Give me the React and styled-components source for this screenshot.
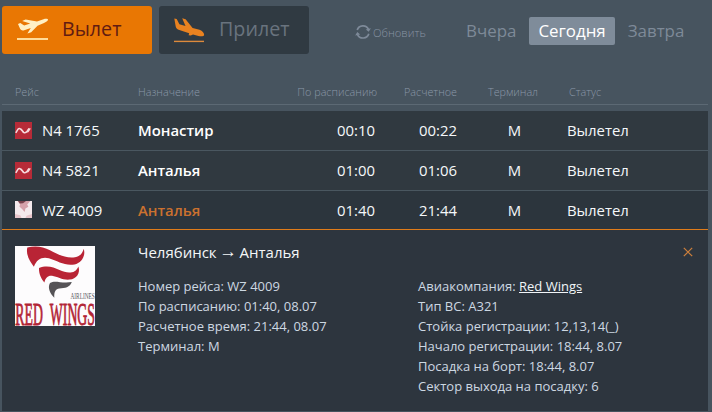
import React, { useState } from 'react';
import styled, { createGlobalStyle } from 'styled-components';

const flights = [
  { number: 'N4 1765', city: 'Монастир', plan: '00:10', fact: '00:22', terminal: 'M', status: 'Вылетел', airline: 'nordwind' },
  { number: 'N4 5821', city: 'Анталья', plan: '01:00', fact: '01:06', terminal: 'M', status: 'Вылетел', airline: 'nordwind' },
  { number: 'WZ 4009', city: 'Анталья', plan: '01:40', fact: '21:44', terminal: 'M', status: 'Вылетел', airline: 'redwings' },
];

const days = ['Вчера', 'Сегодня', 'Завтра'];

const DepartureIcon = () => (
  <svg width="32" height="24" viewBox="0 0 32 24">
    <path
      d="M1 6L3.3 5L7.2 7.6L13.2 5.5L5.2 2.9L8.6 1.4L20 3.5L26.5 1.2C29 .5 31.2 .8 31 1.8C30.8 3 28.8 4.2 27 5L20.5 7.8L14.2 14.2L10.4 15.4L13.8 10L7.2 12.2C5.2 12.7 4 12.2 3.2 11Z"
      fill="#fff0c4"
    />
    <path d="M0 21H31" stroke="#ffdc9a" strokeWidth="2" />
  </svg>
);

const ArrivalIcon = () => (
  <svg width="32" height="25" viewBox="0 0 32 25">
    <path
      d="M.3 .5L2.7 1L5.4 6.2L11.5 8L8.2 .3L11.6 1.2L18.6 9.9L25.5 11.8C28.5 12.8 30.5 15.8 30.1 17.2C29.5 18.6 26.8 18.5 24.5 17.9L19 16.4L16.8 17.6L14.6 17.2L15.2 15.3L5.3 12C3.4 11.3 2.1 10.2 1.7 8.4Z"
      fill="#e98220"
    />
    <path d="M0 23.4H30" stroke="#dd8a3c" strokeWidth="1.4" />
  </svg>
);

const RefreshIcon = () => (
  <svg width="16" height="16" viewBox="0 0 16 16" fill="none" stroke="#7e8a99" strokeWidth="1.7">
    <path d="M2.2 6.1A6.1 6.1 0 0 1 13.5 5.3M13.8 9.7A6.1 6.1 0 0 1 2.5 10.6" />
    <path d="M13.7 7.8L10.8 5.6L15.9 4.3ZM2.3 8.1L5.2 10.4L.2 11.6Z" fill="#7e8a99" stroke="none" />
  </svg>
);

const NordwindLogo = () => (
  <svg width="17" height="17" viewBox="0 0 17 17">
    <path d="M0 0H17V17H0Z" fill="#b72b38" />
    <path d="M.8 10.8L3 7.2C4.2 6 5.6 6.6 6.8 8.2L8.6 10.3C10 11.3 11.2 10.6 12.4 9L14.4 6.4" fill="none" stroke="#f6d9dc" strokeWidth="1.6" />
    <path d="M5.2 6.6L6.8 6.8L9.2 10.6L7.8 10.4ZM13 6.4H16L13.4 10.2L11.6 10.6Z" fill="#f6d9dc" />
  </svg>
);

const RedWingsSmall = () => (
  <svg width="17" height="17" viewBox="0 0 17 17">
    <path d="M0 0H17V17H0Z" fill="#f4e9ec" />
    <path d="M2.6 0H15.3L12.2 3.4L13.4 5.8L10.4 7.6L9.6 11L7.3 8.3L4.4 5.6L5.1 3.5Z" fill="#d5a1aa" />
    <path d="M3 0H11L8 2.3L4.9 2.4Z" fill="#77424c" />
    <path d="M0 13L5.3 14.3L6.6 17H0ZM11.6 14.8L17 13V17H10.4Z" fill="#e6c4ca" />
  </svg>
);

const RedWingsLogo = () => (
  <LogoSvg width="80" height="80" viewBox="0 0 80 80">
    <path d="M0 0H80V80H0Z" fill="#fdfcfd" />
    <path
      d="M12.3 1.5C20-.6 28 .4 35 4.2C44 9 52 12.7 60 11.3C65.5 10.2 67.5 7.1 68.7 2.7C71 9.6 66.6 17.1 59.5 18.4C50 20.2 42.8 15.1 33.9 12.3C27.5 10.3 21.4 13.2 18.9 20.8C15.4 16 10.6 9.3 12.3 1.5Z"
      fill="#b92435"
    />
    <path
      d="M24 22C32 18.7 38.5 21.1 44.5 24.1C52.3 27.8 60.3 28.1 63.4 20.4C65.8 27 61.1 33.1 54.8 33.6C47.6 34.3 42.7 30.5 37 29.7C33.2 29.2 30.4 31.5 29.4 36.5C26.2 32.5 23.8 28.3 24 22Z"
      fill="#b92435"
    />
    <path
      d="M35 37C40.3 33.9 46.1 37.8 56.8 36.1C55 41.4 50 42.3 44.3 42.6C40.7 43 38.9 45.9 39.3 51.8C35.8 48.2 32 42.4 35 37Z"
      fill="#555356"
    />
    <LogoText transform="translate(55.5 53) scale(.71 1)" fontSize="7.5" fill="#56545b">
      AIRLINES
    </LogoText>
    <LogoText transform="translate(.3 79.3) scale(.43 1)" fontSize="32" wordSpacing="9" fill="#b22435" stroke="#b22435" strokeWidth=".9">
      RED WINGS
    </LogoText>
  </LogoSvg>
);

const App = () => {
  const [direction, setDirection] = useState('departure');
  const [day, setDay] = useState('Сегодня');
  const [opened, setOpened] = useState('WZ 4009');

  return (
    <>
      <GlobalStyle />
      <Board>
        <Toolbar>
          <Tab $active={direction === 'departure'} onClick={() => setDirection('departure')}>
            <DepartureIcon />
            <TabText>Вылет</TabText>
          </Tab>
          <Tab $active={direction === 'arrival'} onClick={() => setDirection('arrival')}>
            <ArrivalIcon />
            <TabText>Прилет</TabText>
          </Tab>
          <Refresh>
            <RefreshIcon />
            <span>Обновить</span>
          </Refresh>
          <Days>
            {days.map(item => (
              <Day key={item} $active={item === day} onClick={() => setDay(item)}>
                {item}
              </Day>
            ))}
          </Days>
        </Toolbar>

        <TableHead>
          <span>Рейс</span>
          <span>Назначение</span>
          <Time>По расписанию</Time>
          <Time>Расчетное</Time>
          <Terminal>Терминал</Terminal>
          <span>Статус</span>
        </TableHead>

        <Table>
          {flights.map(item => (
            <Row key={item.number} $opened={item.number === opened} onClick={() => setOpened(item.number)}>
              <Flight>
                {item.airline === 'nordwind' ? <NordwindLogo /> : <RedWingsSmall />}
                <span>{item.number}</span>
              </Flight>
              <City $opened={item.number === opened}>{item.city}</City>
              <Time>{item.plan}</Time>
              <Time>{item.fact}</Time>
              <Terminal>{item.terminal}</Terminal>
              <span>{item.status}</span>
            </Row>
          ))}

          {opened === 'WZ 4009' && (
            <Details>
              <RedWingsLogo />
              <DetailsBody>
                <Route>
                  <span>
                    Челябинск <Arrow>→</Arrow> Анталья
                  </span>
                  <Close aria-label="Закрыть" onClick={() => setOpened(null)}>
                    <svg width="10" height="10" viewBox="0 0 10 10">
                      <path d="M.8 .8L9.2 9.2M9.2 .8L.8 9.2" stroke="#cd7f3c" strokeWidth="1.2" />
                    </svg>
                  </Close>
                </Route>
                <Columns>
                  <Info>
                    <li>Номер рейса: WZ 4009</li>
                    <li>По расписанию: 01:40, 08.07</li>
                    <li>Расчетное время: 21:44, 08.07</li>
                    <li>Терминал: M</li>
                  </Info>
                  <Info>
                    <li>
                      Авиакомпания: <AirlineLink href="#">Red Wings</AirlineLink>
                    </li>
                    <li>Тип ВС: А321</li>
                    <li>Стойка регистрации: 12,13,14(_)</li>
                    <li>Начало регистрации: 18:44, 8.07</li>
                    <li>Посадка на борт: 18:44, 8.07</li>
                    <li>Сектор выхода на посадку: 6</li>
                  </Info>
                </Columns>
              </DetailsBody>
            </Details>
          )}
        </Table>
      </Board>
    </>
  );
};

export default App;

const GlobalStyle = createGlobalStyle`
  * {
    box-sizing: border-box;
  }

  body {
    margin: 0;
    background-color: #47545f;
    font-family: 'Open Sans', 'Noto Sans', sans-serif;
  }

  button {
    border: none;
    padding: 0;
    background: none;
    font: inherit;
    cursor: pointer;
  }

  svg {
    display: block;
    flex-shrink: 0;
  }
`;

const LogoSvg = styled.svg`
  overflow: visible;
`;

const LogoText = styled.text`
  font-family: 'Liberation Serif', serif;
`;

const Board = styled.div`
  width: 712px;
  height: 412px;
  padding: 6px 4px 0 2px;
  overflow: hidden;
`;

const Toolbar = styled.div`
  display: flex;
  height: 48px;
`;

const Tab = styled.button`
  width: 150px;
  height: 48px;
  margin-right: 7px;
  padding-left: 15px;
  border-radius: 3px;
  background-color: ${props => (props.$active ? '#e97703' : '#303a42')};
  color: ${props => (props.$active ? '#611b12' : '#69737e')};
  font-size: 19.7px;

  display: flex;
  align-items: center;
  gap: 13px;
`;

const TabText = styled.span`
  padding-bottom: 3px;
`;

const Refresh = styled.button`
  width: 86px;
  margin-left: 39px;
  padding-top: 4px;
  color: #8793a2;
  font-size: 11.2px;
  font-weight: 300;

  display: flex;
  align-items: center;
  gap: 2px;
`;

const Days = styled.div`
  display: flex;
  align-items: center;
  margin-left: 16px;
  padding-top: 2px;
`;

const Day = styled.button`
  height: 28px;
  padding: 0 9px;
  margin-right: 4px;
  border-radius: 2px;
  background-color: ${props => (props.$active ? '#7f8c9a' : 'transparent')};
  color: ${props => (props.$active ? '#fff' : '#7e8a98')};
  font-size: 16.9px;
  line-height: 28px;
`;

const TableHead = styled.div`
  display: grid;
  grid-template-columns: 123px 134px 105px 80px 112px 1fr;
  align-items: center;
  height: 27px;
  margin: 24px 0 6px;
  padding-left: 13px;
  border-bottom: 1px solid #5c6974;
  color: #8b98a8;
  font-size: 10.8px;
  font-weight: 300;
`;

const Terminal = styled.span`
  text-align: center;
`;

const Table = styled.div`
  height: 300px;
  background-color: #2d353e;
`;

const Row = styled.div`
  display: grid;
  grid-template-columns: 123px 133px 104px 82px 115px 1fr;
  align-items: center;
  height: ${props => (props.$opened ? '39px' : '40px')};
  padding: 0 0 1px 13px;
  border-bottom: 1px solid ${props => (props.$opened ? '#e07c1a' : '#4a5760')};
  background-color: ${props => (props.$opened ? '#2c353d' : '#303940')};
  color: #f5f8fa;
  font-size: 14.9px;
  cursor: pointer;

  & > span:last-child {
    margin-left: -5px;
  }
`;

const Flight = styled.div`
  display: flex;
  align-items: center;
  gap: 10px;
`;

const City = styled.span`
  font-weight: 600;
  color: ${props => (props.$opened ? '#cb712f' : '#fff')};
`;

const Time = styled.span`
  text-align: right;
`;

const Details = styled.div`
  display: flex;
  gap: 43px;
  padding: 16px 15px 0 13px;
`;

const DetailsBody = styled.div`
  flex: 1;
`;

const Route = styled.div`
  display: flex;
  align-items: center;
  justify-content: space-between;
  height: 11px;
  color: #f4f7f8;
  font-size: 15px;
`;

const Arrow = styled.span`
  margin: 0 -1.2px;
  font-family: 'Liberation Sans', sans-serif;
  font-size: 17.5px;
  line-height: 0;
  vertical-align: 1px;
`;

const Close = styled.button`
  width: 10px;
  height: 10px;
`;

const Columns = styled.div`
  display: grid;
  grid-template-columns: 280px 1fr;
  margin-top: 19px;
`;

const Info = styled.ul`
  margin: 0;
  padding: 0;
  list-style: none;
  color: #cdd8e2;
  font-size: 13px;
  line-height: 20px;
`;

const AirlineLink = styled.a`
  color: #f1f5f8;
  text-decoration: underline;
`;
